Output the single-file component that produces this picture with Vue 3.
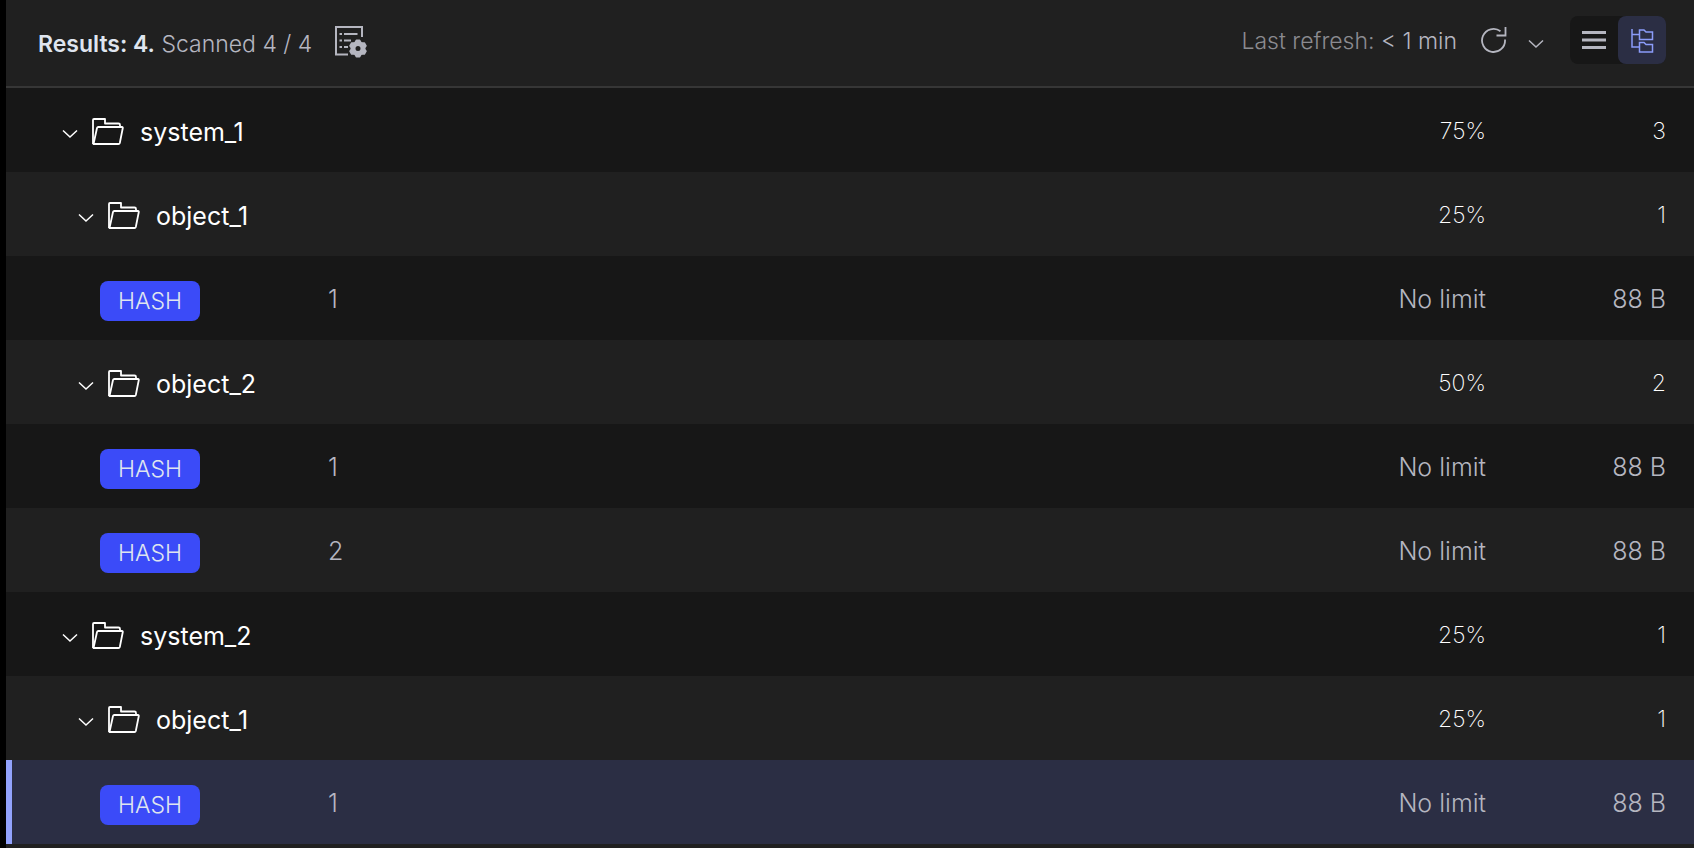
<template>
  <section class="browser">
    <!-- Toolbar -->
    <header class="toolbar">
      <div class="summary">
        <p class="summary-text">
          <strong>Results: 4.</strong> <span>Scanned 4 / 4</span>
        </p>
        <button class="icon-btn" type="button" aria-label="Columns settings">
          <svg width="34" height="34" viewBox="0 0 34 34" fill="none">
            <path d="M28 12V2H2v27.500h12" stroke="currentColor" stroke-width="2" />
            <path d="M5.500 9H8M5.500 15.500H8M5.500 22H8M10 9h13.500M10 15.500h7M10 22h4" stroke="currentColor" stroke-width="2" />
            <circle cx="24" cy="23.500" r="5" stroke="currentColor" stroke-width="5" />
            <path
              v-for="angle in gearAngles"
              :key="angle"
              :transform="`rotate(${angle} 24 23.5)`"
              d="M21.500 17l.8-1.800h3.400l.8 1.800z"
              fill="currentColor"
              stroke="currentColor"
              stroke-width="1.500"
              stroke-linejoin="round"
            />
          </svg>
        </button>
      </div>

      <div class="controls">
        <p class="refresh-text">Last refresh: <span>&lt; 1 min</span></p>
        <button class="icon-btn refresh-btn" type="button" aria-label="Refresh" @click="refresh">
          <svg width="28" height="28" viewBox="0 0 28 28" fill="none" stroke="currentColor" stroke-width="1.800">
            <path d="M25 13.500A11.500 11.500 0 1 1 20.500 5.300" />
            <path d="M25.500 1v8.500h-9" />
          </svg>
        </button>
        <button class="icon-btn caret-btn" type="button" aria-label="Auto refresh options">
          <svg width="16" height="10" viewBox="0 0 16 10" fill="none" stroke="currentColor" stroke-width="1.500">
            <path d="M1 1.500l7 6.500 7-6.500" />
          </svg>
        </button>
        <div class="view-switch" role="group" aria-label="View">
          <button
            type="button"
            class="view-btn"
            :class="{ active: view === 'list' }"
            aria-label="List view"
            @click="view = 'list'"
          >
            <svg width="24" height="20" viewBox="0 0 24 20" fill="none" stroke="currentColor" stroke-width="3">
              <path d="M0 2.500h24M0 10h24M0 17.500h24" />
            </svg>
          </button>
          <button
            type="button"
            class="view-btn"
            :class="{ active: view === 'tree' }"
            aria-label="Tree view"
            @click="view = 'tree'"
          >
            <svg width="24" height="26" viewBox="0 0 24 26" fill="none" stroke="currentColor" stroke-width="1.500">
              <path d="M2 2v18h7.500M2 7.500h7.500" />
              <path d="M9.500 3h4.500l2 2h6.500v7.500h-13zM9.500 15.500h4.500l2 2h6.500V25h-13z" />
            </svg>
          </button>
        </div>
      </div>
    </header>

    <!-- Keys -->
    <table class="tree" aria-label="Keys">
      <colgroup>
        <col class="col-type" />
        <col />
        <col class="col-ttl" />
        <col class="col-size" />
      </colgroup>
      <tbody>
        <tr
          v-for="row in visibleRows"
          :key="row.id"
          :class="{ folder: row.name, selected: row.id === selectedId }"
          @click="select(row)"
        >
          <td v-if="row.name" class="name" colspan="2">
            <button
              type="button"
              class="folder-btn"
              :class="{ nested: row.level > 0 }"
              :aria-expanded="!collapsed.includes(row.id)"
              @click="toggle(row.id)"
            >
              <svg class="arrow" width="16" height="10" viewBox="0 0 16 10" fill="none" stroke="currentColor" stroke-width="1.500">
                <path d="M1 1.500l7 6.500 7-6.500" />
              </svg>
              <svg width="32" height="28" viewBox="0 0 32 28" fill="none" stroke="currentColor" stroke-width="1.800" stroke-linejoin="round">
                <path d="M1 26V2q0-1 1-1h11v4.500h13.500q1.500 0 1.500 1.500v2" />
                <path d="M1.500 26L5 10q.3-1 1.300-1H30q1 0 .8 1l-3 15q-.3 1-1.300 1z" />
              </svg>
              <span>{{ row.name }}</span>
            </button>
          </td>
          <template v-else>
            <td class="type"><span class="badge">HASH</span></td>
            <td>{{ row.key }}</td>
          </template>
          <td class="num">{{ row.ttl }}</td>
          <td class="num last">{{ row.size }}</td>
        </tr>
      </tbody>
    </table>
  </section>
</template>

<script setup>
import { ref, computed } from 'vue'

const gearAngles = [0, 60, 120, 180, 240, 300]

const rows = [
  { id: 's1', level: 0, name: 'system_1', ttl: '75%', size: '3', parents: [] },
  { id: 's1o1', level: 1, name: 'object_1', ttl: '25%', size: '1', parents: ['s1'] },
  { id: 's1o1k1', key: '1', ttl: 'No limit', size: '88 B', parents: ['s1', 's1o1'] },
  { id: 's1o2', level: 1, name: 'object_2', ttl: '50%', size: '2', parents: ['s1'] },
  { id: 's1o2k1', key: '1', ttl: 'No limit', size: '88 B', parents: ['s1', 's1o2'] },
  { id: 's1o2k2', key: '2', ttl: 'No limit', size: '88 B', parents: ['s1', 's1o2'] },
  { id: 's2', level: 0, name: 'system_2', ttl: '25%', size: '1', parents: [] },
  { id: 's2o1', level: 1, name: 'object_1', ttl: '25%', size: '1', parents: ['s2'] },
  { id: 's2o1k1', key: '1', ttl: 'No limit', size: '88 B', parents: ['s2', 's2o1'] }
]

const view = ref('tree')
const selectedId = ref('s2o1k1')
const collapsed = ref([])

// rows whose parent folders are all open
const visibleRows = computed(() =>
  rows.filter((row) => !row.parents.some((id) => collapsed.value.includes(id)))
)

const toggle = (id) => {
  collapsed.value = collapsed.value.includes(id)
    ? collapsed.value.filter((item) => item !== id)
    : [...collapsed.value, id]
}

const select = (row) => {
  if (!row.name) selectedId.value = row.id
}

const refresh = () => {
  collapsed.value = []
}
</script>

<style>
body {
  background: #000;
}
</style>

<style scoped>
.browser {
  box-sizing: border-box;
  min-height: 100vh;
  margin-left: 6px;
  background: #202020;
  color: #b5b6c0;
  font-family: Inter, "Liberation Sans", sans-serif;
  font-size: 25px;
  font-weight: 300;
  line-height: 32px;
}

button {
  padding: 0;
  border: none;
  background: none;
  color: inherit;
  font: inherit;
  cursor: pointer;
}

svg {
  display: block;
  flex: none;
}

/* Toolbar */
.toolbar {
  display: flex;
  align-items: flex-start;
  justify-content: space-between;
  height: 86px;
  border-bottom: 2px solid #363636;
  font-size: 23px;
}

.summary {
  display: flex;
  align-items: center;
  gap: 22px;
  padding: 24px 0 0 32px;
}

.summary-text,
.refresh-text {
  margin: 0;
  padding-top: 4px;
  white-space: nowrap;
}

.summary-text strong {
  color: #dfe5ef;
  font-weight: 600;
}

.controls {
  display: flex;
  align-items: center;
  padding: 16px 28px 0 0;
}

.refresh-text {
  padding-top: 2px;
  color: #8b8b90;
}

.refresh-text span {
  color: #b5b6c0;
}

.refresh-btn {
  margin-left: 23px;
}

.caret-btn {
  margin: 8px 26px 0 20px;
}

.view-switch {
  display: flex;
  border-radius: 8px;
  background: #171717;
}

.view-btn {
  display: flex;
  align-items: center;
  justify-content: center;
  width: 48px;
  height: 48px;
  border-radius: 8px;
}

.view-btn.active {
  background: #2b2e44;
  color: #8b9cf9;
}

/* Tree */
.tree {
  width: 100%;
  table-layout: fixed;
  border-collapse: collapse;
}

.col-type {
  width: 322px;
}

.col-ttl {
  width: 200px;
}

.col-size {
  width: 208px;
}

tr {
  height: 84px;
  background: #171717;
}

tr:nth-child(even) {
  background: #202020;
}

tr.selected {
  background: #2b2e44;
  box-shadow: inset 6px 0 #92a2fc;
}

td {
  padding: 2px 0 0;
}

.num {
  text-align: right;
  white-space: nowrap;
}

.num.last {
  padding-right: 28px;
}

.folder {
  color: #fff;
}

.folder .num {
  font-size: 23px;
  font-weight: 200;
}

.name {
  padding-top: 4px;
  font-weight: 400;
}

.folder-btn {
  display: flex;
  align-items: center;
  padding-left: 56px;
}

.folder-btn.nested {
  padding-left: 72px;
}

.folder-btn .arrow {
  margin: 4px 14px 0 0;
}

.folder-btn span {
  margin-left: 16px;
}

.folder-btn[aria-expanded="false"] .arrow {
  transform: rotate(-90deg);
}

.type {
  padding: 6px 0 0 94px;
}

.badge {
  display: block;
  width: max-content;
  padding: 4px 18px;
  border-radius: 8px;
  background: #3b4bf8;
  color: #dfe5ef;
  font-size: 23px;
}
</style>
